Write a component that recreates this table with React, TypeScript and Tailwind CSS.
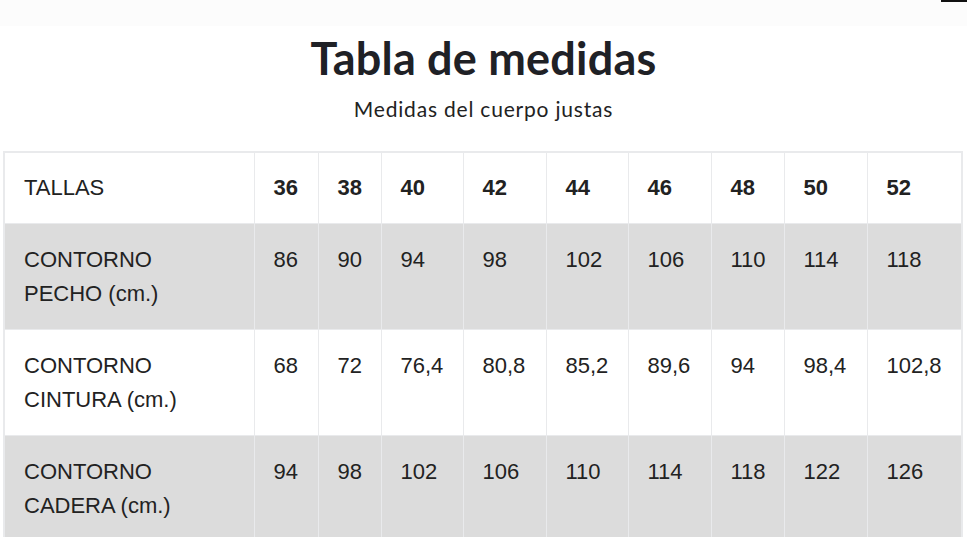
import React from "react";

const sizes = ["36", "38", "40", "42", "44", "46", "48", "50", "52"];
const widths = ["w-[250px]", "w-[64px]", "w-[63px]", "w-[82px]", "w-[83px]", "w-[82px]", "w-[83px]", "w-[73px]", "w-[83px]", "w-[95px]"];

const rows: { label: string[]; values: string[]; gray: boolean }[] = [
  { label: ["CONTORNO", "PECHO (cm.)"], values: ["86", "90", "94", "98", "102", "106", "110", "114", "118"], gray: true },
  { label: ["CONTORNO", "CINTURA (cm.)"], values: ["68", "72", "76,4", "80,8", "85,2", "89,6", "94", "98,4", "102,8"], gray: false },
  { label: ["CONTORNO", "CADERA (cm.)"], values: ["94", "98", "102", "106", "110", "114", "118", "122", "126"], gray: true },
];

export default function App() {
  return (
    <div className="relative w-[967px] h-[537px] overflow-hidden bg-white">
      <div className="absolute right-0 top-0 h-[2px] w-[26px] bg-[#111]" />
      <div className="h-[26px] bg-[#fcfcfc]" />
      <h1
        className="mt-[5px] text-center text-[45px] font-bold leading-[54px] text-[#1f2126] tracking-[0.2px]"
        style={{ fontFamily: "Lato, 'Open Sans', sans-serif" }}
      >
        Tabla de medidas
      </h1>
      <p
        className="mt-[12px] text-center text-[21px] leading-[24px] text-[#222] tracking-[0.8px]"
        style={{ fontFamily: "Lato, 'Open Sans', sans-serif" }}
      >
        Medidas del cuerpo justas
      </p>
      <div className="pl-[3px] pt-[30px]">
        <table
          className="w-[960px] table-fixed border-collapse border-2 border-[#e9eaec] text-[22px] leading-[34px] text-[#222]"
          style={{ fontFamily: "'Liberation Sans', Arial, sans-serif" }}
        >
          <colgroup>
            {widths.map((w, i) => (
              <col key={i} className={w} />
            ))}
          </colgroup>
          <tbody>
            <tr className="bg-white">
              <td className="border border-[#e9eaec] pl-[19px] pr-[20px] pt-[18px] pb-[18px] align-top">TALLAS</td>
              {sizes.map((s) => (
                <td key={s} className="border border-[#e9eaec] pl-[19px] pr-0 pt-[18px] pb-[18px] align-top font-bold">
                  {s}
                </td>
              ))}
            </tr>
            {rows.map((r, i) => (
              <tr key={i} className={r.gray ? "bg-[#dcdcdc]" : "bg-white"}>
                <td className="border border-[#e9eaec] pl-[19px] pr-[20px] pt-[19px] pb-[18px] align-top">
                  {r.label[0]}
                  <br />
                  {r.label[1]}
                </td>
                {r.values.map((v, j) => (
                  <td key={j} className="border border-[#e9eaec] pl-[19px] pr-0 pt-[19px] pb-[18px] align-top">
                    {v}
                  </td>
                ))}
              </tr>
            ))}
          </tbody>
        </table>
      </div>
    </div>
  );
}
